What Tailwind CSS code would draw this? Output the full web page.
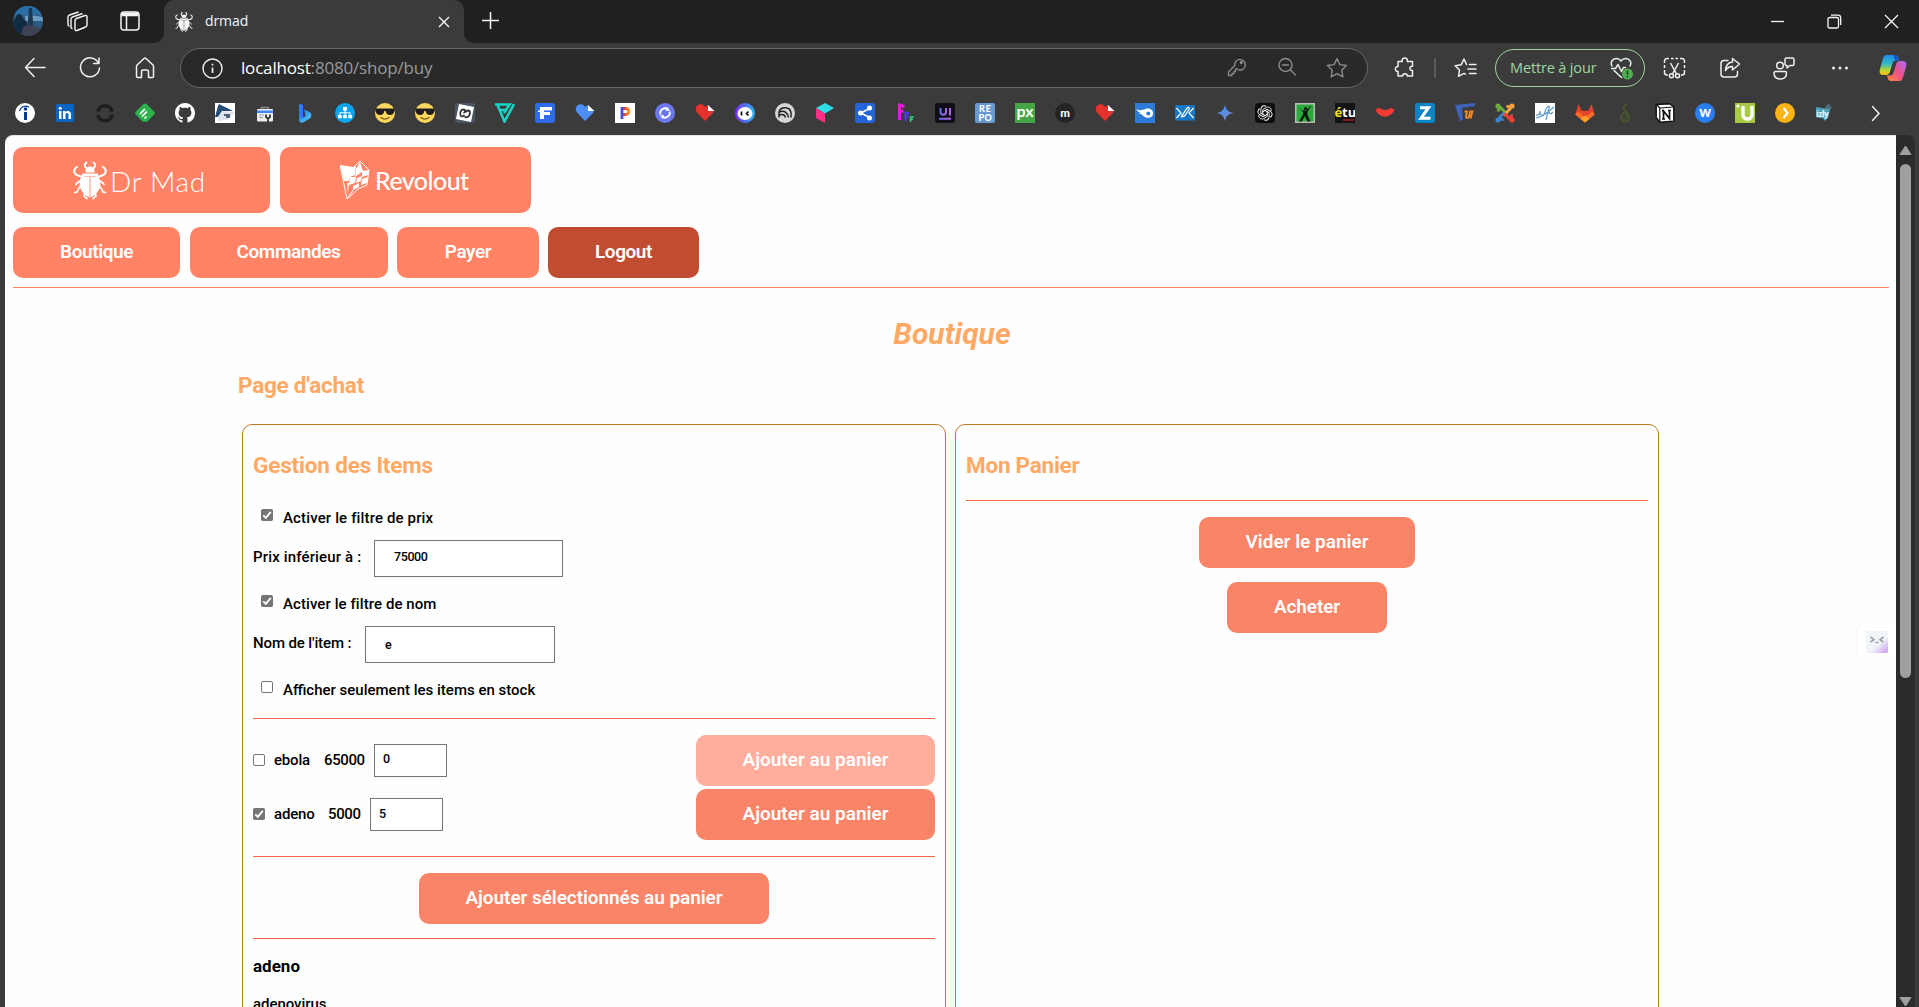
<!DOCTYPE html>
<html lang="fr">
<head>
<meta charset="utf-8">
<title>drmad</title>
<script src="https://cdn.jsdelivr.net/npm/@tailwindcss/browser@4"></script>
</head>
<body class="flex h-[1007px] w-[1919px] flex-col overflow-hidden bg-[#3b3b3b] font-['Roboto',sans-serif] text-black">

<!-- shared symbols -->
<svg class="hidden">
  <symbol id="beetle" viewBox="0 0 34 38">
    <g fill="none" stroke="currentColor" stroke-width="1.700" stroke-linecap="round">
      <path d="M13.500 1C10.500 3 12 6.500 14.500 7.500M20.500 1C23.500 3 22 6.500 19.500 7.500" stroke-width="2"/>
      <path d="M4 5.500C-.5 8 1 13 5 14l6 2M30 5.500c4.500 2.500 3 7.500-1 8.500l-6 2" stroke-width="2"/>
      <path d="M9 19c-3.500.5-5 2-6 4M25 19c3.500.5 5 2 6 4M9 24c-3 1-4 4-5 6.500l-2.500.5M25 24c3 1 4 4 5 6.500l2.500.5M12 31l-1 3.500 3 2.500M22 31l1 3.500-3 2.500"/>
    </g>
    <g fill="currentColor">
      <path d="M12.500 9.500C12.500 6 15 5 17 5s4.500 1 4.500 4.500V11h-9z"/>
      <path d="M9 12h16v3H9z"/>
      <path d="M16.600 15.500v20.500C11 34 6.500 28 6.500 22c0-2.500.7-4.500 2-6.500zM17.400 15.500v20.500C23 34 27.500 28 27.500 22c0-2.500-.7-4.500-2-6.500z"/>
    </g>
  </symbol>
  <symbol id="cool" viewBox="0 0 20 20">
    <circle cx="10" cy="10" r="10" fill="#ffd75e"/>
    <path d="M0.500 5.500H19.500V7.500C19 10.800 17.500 12 15 12s-4-1.500-4.300-4H9.300C9 10.500 7.500 12 5 12S1 10.800.5 7.500z" fill="#1f1f1f"/>
    <path d="M6 14.500c2.500 2 5.500 2 8 0" fill="none" stroke="#7a5a1a" stroke-width="1.200" stroke-linecap="round"/>
  </symbol>
  <symbol id="heartdoc" viewBox="0 0 20 20">
    <path d="M10 18L2 9.500C-1 6 1.500 1 6 1.200 8 1.400 9.500 2.500 10 4L13 2v6h6c-.3 1-1 2-2 3z" fill="currentColor"/>
    <path d="M13 2l6.500 6H13z" fill="#fff"/>
  </symbol>
  <symbol id="check" viewBox="0 0 12 12">
    <rect width="12" height="12" rx="1.800" fill="#757575"/>
    <path d="M2.300 6.300l2.500 2.500 5-6" fill="none" stroke="#fff" stroke-width="1.900"/>
  </symbol>
</svg>

<!-- tab strip -->
<div class="flex h-[43px] shrink-0 bg-[#202020] text-[#f5f5f5]">
  <div class="w-[164px] bg-[#3b3b3b]">
    <div class="flex h-[43px] items-center rounded-br-[10px] bg-[#202020] pl-[13px] pb-px">
      <svg class="size-[30px]" viewBox="0 0 30 30"><defs><clipPath id="av"><circle cx="15" cy="15" r="15"/></clipPath></defs><g clip-path="url(#av)"><path fill="#2d5a82" d="M0 0h30v30H0z"/><path fill="#2a6ea6" d="M0 0h30v9H0z"/><path fill="#6a9cc0" d="M12 10l5-1 13 2v4H12z"/><path fill="#122a42" d="M3 11c1-4 6-4 6 0l4 4 2 7v8H0V16z"/><path fill="#20384d" d="M16 2l3 0 1.500 20h-6z"/><path fill="#3f4252" d="M10 21c5-3 12-2 18 2v7H8z"/></g></svg>
      <svg class="ml-[23px] size-[23px]" viewBox="0 0 23 23" fill="none" stroke="currentColor" stroke-width="1.400" stroke-linejoin="round"><path d="M9 10.500c0-1 .5-1.500 1.500-2L19 5.500c1.300-.4 2 .2 2 1.300V15c0 1-.5 1.600-1.500 2L11 20.500c-1.300.5-2-.2-2-1.300z"/><path d="M6.500 18.500c-1 0-1.500-.5-1.500-1.500V9c0-1 .5-1.500 1.500-2L16.500 3.500M3.500 16C2.500 16 2 15.500 2 14.500V7c0-1 .5-1.500 1.500-2L12.500 2"/></svg>
      <svg class="ml-[31px] size-[20px]" viewBox="0 0 20 20" fill="none" stroke="currentColor" stroke-width="1.500"><rect x="1" y="1" width="18" height="18" rx="3"/><path d="M1.500 4.500h17" /><path d="M2 3h16" stroke-width="3"/><path d="M6.500 5v14"/></svg>
    </div>
  </div>
  <div class="flex w-[300px] items-center rounded-t-[10px] bg-[#3b3b3b] pl-[10px] pr-[13px]">
    <svg class="size-[20px]"><use href="#beetle"/></svg>
    <span class="mb-[2px] ml-[11px] font-['Open_Sans',sans-serif] text-[14px] tracking-[-0.1px]">drmad</span>
    <svg class="ml-auto size-[14px]" viewBox="0 0 14 14" stroke="currentColor" stroke-width="1.400"><path d="M2 2l10 10M12 2L2 12"/></svg>
  </div>
  <div class="flex-1 bg-[#3b3b3b]">
    <div class="flex h-[43px] rounded-bl-[10px] bg-[#202020]">
      <svg class="ml-[17px] mt-[11px] size-[19px]" viewBox="0 0 19 19" stroke="currentColor" stroke-width="1.500"><path d="M9.500 1v17M1 9.500h17"/></svg>
      <div class="ml-auto mt-[14px] flex gap-[42px] pr-[20px]">
        <svg class="size-[15px]" viewBox="0 0 15 15" stroke="currentColor" stroke-width="1.300"><path d="M1 7.500h13"/></svg>
        <svg class="size-[15px]" viewBox="0 0 15 15" fill="none" stroke="currentColor" stroke-width="1.300"><rect x="1" y="3.500" width="10.500" height="10.500" rx="1.500"/><path d="M4 1.200h7c1.800 0 2.700 1 2.700 2.700v7"/></svg>
        <svg class="size-[15px]" viewBox="0 0 15 15" stroke="currentColor" stroke-width="1.300"><path d="M1 1l13 13M14 1L1 14"/></svg>
      </div>
    </div>
  </div>
</div>

<!-- toolbar -->
<div class="flex h-[50px] shrink-0 items-center pl-[7px] text-[#f0f0f0]">
  <div class="flex w-[165px]">
    <div class="flex w-[55px] justify-center"><svg class="size-[24px]" viewBox="0 0 24 24" fill="none" stroke="currentColor" stroke-width="1.500" stroke-linecap="round" stroke-linejoin="round"><path d="M22 11.500H2.500M11 2.500l-8.500 9 8.500 9"/></svg></div>
    <div class="flex w-[55px] justify-center"><svg class="size-[24px]" viewBox="0 0 24 24" fill="none" stroke="currentColor" stroke-width="1.500" stroke-linecap="round" stroke-linejoin="round"><path d="M20.500 7A9.500 9.500 0 1021.500 12M21 2v5.500h-5.500"/></svg></div>
    <div class="flex w-[55px] justify-center"><svg class="size-[24px]" viewBox="0 0 24 24" fill="none" stroke="currentColor" stroke-width="1.500" stroke-linejoin="round"><path d="M3.500 10.500c0-.8.300-1.200.8-1.700L11 2.500c.7-.6 1.300-.6 2 0l6.700 6.300c.5.500.8.900.8 1.700V20.500a1 1 0 01-1 1h-4V15.500a1.500 1.500 0 00-1.500-1.500h-4a1.500 1.500 0 00-1.500 1.500v6h-4a1 1 0 01-1-1z"/></svg></div>
  </div>
  <div class="ml-[8px] flex h-[40px] w-[1188px] items-center rounded-full border border-[#666] bg-[#292929] pl-[21px] pr-[5px]">
    <svg class="size-[21px]" viewBox="0 0 21 21" fill="none" stroke="currentColor" stroke-width="1.400"><circle cx="10.500" cy="10.500" r="9.500"/><path d="M10.500 9.500V15M10.500 5.800v1.800" stroke-width="1.700"/></svg>
    <span class="ml-[18px] flex-1 font-['Open_Sans',sans-serif] text-[17px] tracking-[-0.18px] text-[#999]"><span class="text-white">localhost</span>:8080/shop/buy</span>
    <div class="flex text-[#8c8c8c]">
      <div class="flex w-[50px] justify-center"><svg class="size-[20px]" viewBox="0 0 20 20" fill="none" stroke="currentColor" stroke-width="1.300" stroke-linejoin="round"><path d="M9.200 11.500a5.300 5.300 0 10-1.500-3L1.500 15V18.500H5V16.500h2v-2h1.500v-2z"/><circle cx="14.300" cy="5.500" r="1"/></svg></div>
      <div class="flex w-[50px] justify-center"><svg class="size-[20px]" viewBox="0 0 20 20" fill="none" stroke="currentColor" stroke-width="1.400" stroke-linecap="round"><circle cx="8.500" cy="8" r="6.500"/><path d="M13.300 12.800L18.500 18M5.500 8h6"/></svg></div>
      <div class="flex w-[50px] justify-center"><svg class="size-[22px]" viewBox="0 0 22 22" fill="none" stroke="currentColor" stroke-width="1.400" stroke-linejoin="round"><path d="M11 1.500l2.900 6.100 6.600.9-4.800 4.700 1.200 6.700-5.900-3.200-5.900 3.200 1.200-6.700L1.500 8.500l6.600-.9z"/></svg></div>
    </div>
  </div>
  <div class="ml-[10px] flex w-[54px] justify-center"><svg class="size-[22px]" viewBox="0 0 22 22" fill="none" stroke="currentColor" stroke-width="1.500" stroke-linejoin="round"><path d="M4 4.500h4.200c-.5-2.500 1-3.500 2.600-3.500s3 1 2.500 3.500H18.500v4.700c-3.500-.3-3.500 4.600 0 4.300V19h-5.200c.4-3-5-3-4.800 0H4v-4.500c-3.500.3-3.500-5.300 0-5z"/></svg></div>
  <div class="ml-[2px] h-[20px] w-[2px] bg-[#5c5c5c]"></div>
  <div class="ml-[2px] flex w-[54px] justify-center"><svg class="size-[23px]" viewBox="0 0 23 23" fill="none" stroke="currentColor" stroke-width="1.500" stroke-linejoin="round" stroke-linecap="round"><path d="M12.500 7.500L10 2 7.200 7.800l-6 .9L5.500 13l-1 6.300L10 16.400l1.500.8M15.500 7.500H22M14 12h8M15.500 16.500H22"/></svg></div>
  <div class="ml-[3px] flex h-[38px] w-[150px] shrink-0 items-center justify-between rounded-full border-[1.500px] border-[#9fd89f] pl-[14px] pr-[11px]">
    <span class="whitespace-nowrap font-['Open_Sans',sans-serif] text-[14.500px] tracking-[-0.15px] text-[#9fd89f]">Mettre à jour</span>
    <svg class="size-[23px]" viewBox="0 0 23 23" fill="none" stroke="#e8f5e8" stroke-width="1.500" stroke-linejoin="round" stroke-linecap="round"><path d="M2 9C0 5 2.500 1.500 6.300 1.500c2 0 3.700 1 4.700 2.500 1-1.500 2.700-2.500 4.700-2.500 4 0 6.300 4 4.300 7.500M4 13.500l7.500 7M1.500 11.500H5.500L8 7.500l3.500 7 2-4h2"/><circle cx="17.500" cy="17" r="5.500" fill="#4caf50" stroke="none"/><path d="M17.500 14v3.200M17.500 19.500v.3" stroke="#1c3d1c"/></svg>
  </div>
  <div class="ml-[2px] flex items-center">
    <div class="flex w-[55px] justify-center"><svg class="size-[23px]" viewBox="0 0 23 23" fill="none" stroke="currentColor" stroke-width="1.500"><path d="M1.500 6V4a2.500 2.500 0 012.500-2.500h2M8 1.500h2.500M12.500 1.500H15M17 1.500h2A2.500 2.500 0 0121.500 4v2M1.500 8v3M21.500 8v3M1.500 13v2.500A2.500 2.500 0 004 18h1M21.500 13v2.500A2.500 2.500 0 0119 18h-1M7.500 6l6 11M15.500 6l-6 11"/><circle cx="8.500" cy="18.800" r="2"/><circle cx="14.500" cy="18.800" r="2"/></svg></div>
    <div class="flex w-[55px] justify-center"><svg class="size-[22px]" viewBox="0 0 22 22" fill="none" stroke="currentColor" stroke-width="1.500" stroke-linejoin="round" stroke-linecap="round"><path d="M9 3.500H5A3 3 0 002 6.500V17a3 3 0 003 3h10.500a3 3 0 003-3v-2.500M13.500 1.500L20.500 7l-7 6v-3.500c-3.500 0-5.500 1.500-7 4 .3-5 2.500-8 7-8.500z"/></svg></div>
    <div class="flex w-[55px] justify-center"><svg class="size-[23px]" viewBox="0 0 23 23" fill="none" stroke="currentColor" stroke-width="1.500" stroke-linejoin="round"><circle cx="7" cy="8.500" r="3.300"/><path d="M2.500 14.500h9.500a1.500 1.500 0 011.500 1.500c0 4-2.500 6-6.200 6S1 20 1 16a1.500 1.500 0 011.500-1.500zM13.500 1h6A1.500 1.500 0 0121 2.500V7a1.500 1.500 0 01-1.500 1.500h-2.700L14 11V8.500h-.5A1.500 1.500 0 0112 7V2.500A1.500 1.500 0 0113.500 1z"/></svg></div>
    <div class="flex w-[55px] justify-center"><svg class="size-[18px]" viewBox="0 0 18 18" fill="currentColor"><circle cx="2.500" cy="9" r="1.500"/><circle cx="9" cy="9" r="1.500"/><circle cx="15.500" cy="9" r="1.500"/></svg></div>
    <div class="flex w-[51px] justify-center"><svg class="size-[28px]" viewBox="0 0 28 28"><defs><linearGradient id="ca" x1="0" y1="0" x2="0" y2="1"><stop offset="0" stop-color="#1b8fe8"/><stop offset=".45" stop-color="#35b8c9"/><stop offset=".75" stop-color="#b8d431"/><stop offset="1" stop-color="#ffc21a"/></linearGradient><linearGradient id="cb" x1="1" y1="0" x2="0" y2="1"><stop offset="0" stop-color="#a56bf5"/><stop offset=".5" stop-color="#f04f8c"/><stop offset="1" stop-color="#ff8a3c"/></linearGradient></defs><path d="M8 1h8c2 0 2.800 1.200 3.300 3l.7 2.500h-3c-2 0-3 1-3.600 3L11 17.500c-.8 2.600-2 3.500-4 3.500H4C1 21 0 18.500 1 15L4 4.500C4.700 2 6 1 8 1z" fill="url(#ca)"/><path d="M20 27h-8c-2 0-2.800-1.200-3.300-3L8 21.500h3c2 0 3-1 3.600-3L17 10.500C17.800 8 19 7 21 7h3c3 0 4 2.500 3 6l-3 10.500c-.7 2.500-2 3.500-4 3.500z" fill="url(#cb)"/><path d="M14 1h2c2 0 2.800 1.200 3.300 3l.7 2.500h-4z" fill="#1557c9"/></svg></div>
  </div>
</div>

<!-- bookmarks -->
<div class="flex h-[42px] shrink-0 items-center gap-[20px] overflow-hidden pb-[2px] pl-[15px]">
  <svg class="size-[20px] shrink-0" viewBox="0 0 20 20"><circle cx="10" cy="10" r="10" fill="#fff"/><circle cx="10.500" cy="6" r="1.800" fill="#003a9b"/><path d="M9 9h3v8H9z" fill="#003a9b"/><path d="M4.500 8C6 3.500 10 1.800 14 4" fill="none" stroke="#003a9b" stroke-width="1.200"/></svg>
  <svg class="size-[20px] shrink-0" viewBox="0 0 20 20"><rect x="1" y="1" width="18" height="18" rx="1.500" fill="#0a66c2"/><path d="M4 8h2.500v8H4zM8 8h2.400v1.200c1.300-2.200 5.600-1.700 5.600 1.800v5h-2.500v-4.500c0-2-3-2-3 0V16H8z" fill="#fff"/><circle cx="5.200" cy="5.200" r="1.500" fill="#fff"/></svg>
  <svg class="size-[20px] shrink-0" viewBox="0 0 20 20" fill="none" stroke="#1e1e1e" stroke-width="3.500"><path d="M2.700 8.500a7.500 7.500 0 0114.600 0M2.700 12a7.500 7.500 0 0014.600 0"/></svg>
  <svg class="size-[20px] shrink-0" viewBox="0 0 20 20"><path d="M10 .5c.6 0 1 .2 1.500.6l7.800 7.600c.7.800.7 1.700 0 2.500L13 18c-.5.500-1 .8-1.700.8H8.700c-.7 0-1.200-.3-1.700-.8L.7 11.200c-.7-.8-.7-1.700 0-2.500l7.800-7.600C9 .7 9.400.5 10 .5z" fill="#2bb24c"/><path d="M5 11l5-5M7 13.500l5-5M9.500 15.500l2-2" stroke="#fff" stroke-width="1.700"/></svg>
  <svg class="size-[20px] shrink-0" viewBox="0 0 16 16" fill="#fff"><path d="M8 0C3.580 0 0 3.580 0 8c0 3.540 2.290 6.530 5.470 7.590.4.070.55-.17.550-.38 0-.19-.01-.82-.01-1.490-2.010.370-2.530-.49-2.690-.94-.09-.23-.48-.94-.82-1.130-.28-.15-.68-.52-.01-.53.630-.01 1.080.580 1.230.820.720 1.210 1.870.870 2.330.660.070-.52.280-.87.510-1.070-1.780-.2-3.640-.89-3.640-3.950 0-.87.310-1.590.820-2.150-.08-.2-.36-1.020.080-2.120 0 0 .670-.21 2.200.820.640-.18 1.320-.27 2-.27s1.360.090 2 .270c1.530-1.040 2.200-.82 2.200-.82.440 1.100.160 1.920.080 2.120.510.560.820 1.270.820 2.150 0 3.070-1.870 3.750-3.650 3.950.290.250.540.730.540 1.480 0 1.070-.01 1.930-.01 2.200 0 .210.150.460.550.380A8.010 8.010 0 0016 8c0-4.420-3.580-8-8-8z"/></svg>
  <svg class="size-[20px] shrink-0" viewBox="0 0 20 20"><path fill="#fff" d="M0 0h20v20H0z"/><path d="M4 1l14 7H7l-4 6H0L3 3z" fill="#274c77"/><path d="M3 14l5-6 12 1-8 8-9 1z" fill="#dfe6ee"/><path d="M9 12h6M11 14h4" stroke="#26374d" stroke-width="1.500"/></svg>
  <svg class="size-[20px] shrink-0" viewBox="0 0 20 20"><path d="M6.500 6V4.500h7V6" fill="none" stroke="#8a8a8a" stroke-width="1.500"/><rect x="2" y="6" width="16" height="12.500" rx="1" fill="#eceff1"/><path d="M2 7.500h16V10H2z" fill="#4285f4"/><path d="M4 12h5M4 14.500h4" stroke="#9aa0a6"/><path d="M11 11.500v2.500l2 1.500 2-1.500v-2.500M13 15v4" stroke="#333" stroke-width="1.800" fill="none"/></svg>
  <svg class="size-[20px] shrink-0" viewBox="0 0 20 20"><defs><linearGradient id="bg" x1="0" y1="0" x2="1" y2="1"><stop offset="0" stop-color="#1e78f0"/><stop offset="1" stop-color="#5ad0f8"/></linearGradient></defs><path d="M4 0.500l4 1.500v13l-4 3.500z" fill="#2b7df5"/><path d="M9 6.500l5.500 2.500c2 1 2.500 4 1 6L8 19.500c-2.500 1-4-1-4-3l6.800-3.500z" fill="url(#bg)"/></svg>
  <svg class="size-[20px] shrink-0" viewBox="0 0 20 20"><circle cx="10" cy="10" r="10" fill="#0aa5ee"/><path d="M8 4h4v3.500H8zM3 12h3.700v3.300H3zM8.200 12h3.700v3.300H8.200zM13.300 12H17v3.300h-3.700z" fill="#fff"/><path d="M10 7v5M4.800 12V9.800h10.400V12" fill="none" stroke="#fff"/></svg>
  <svg class="size-[20px] shrink-0"><use href="#cool"/></svg>
  <svg class="size-[20px] shrink-0"><use href="#cool"/></svg>
  <svg class="size-[20px] shrink-0" viewBox="0 0 20 20"><rect width="20" height="20" rx="3" fill="#4b5563"/><path d="M4 1l15 3-3 15L1 16z" fill="#fff"/><path d="M5.500 12.500c-1-3 .5-6 3-6 2 0 2 3 0 3.500M9.500 14c3 1 5.500-1 5.500-4 0-3.500-4-3-4-.5M5.500 12.500c1 1.500 3 1 4-.5" fill="none" stroke="#333" stroke-width="1.800"/></svg>
  <svg class="size-[20px] shrink-0" viewBox="0 0 20 20" fill="none" stroke="#19d3c5" stroke-width="2.600"><path d="M0 1.500h14.500L9 10M2.500 2l7 16.500L19 1M5.500 7H11"/></svg>
  <svg class="size-[20px] shrink-0" viewBox="0 0 20 20"><rect width="20" height="20" rx="3" fill="#2f6bed"/><path d="M5 4h12v3.500H9V9h6v3H9v4H5V9H3V7.500h2z" fill="#fff"/></svg>
  <svg class="size-[20px] shrink-0 text-[#4d8ef7]"><use href="#heartdoc"/></svg>
  <svg class="size-[20px] shrink-0" viewBox="0 0 20 20"><defs><linearGradient id="pg"><stop offset="0" stop-color="#3c4fe0"/><stop offset=".45" stop-color="#e8492e"/><stop offset="1" stop-color="#f59c28"/></linearGradient></defs><path fill="#fff" d="M0 0h20v20H0z"/><path d="M7 16V5.500h3.500c4.500 0 4.500 6 0 6H7" fill="none" stroke="url(#pg)" stroke-width="2.800"/></svg>
  <svg class="size-[20px] shrink-0" viewBox="0 0 20 20"><circle cx="10" cy="10" r="10" fill="#6d78ee"/><path d="M5.500 11.500A4.700 4.700 0 0113 6.500M14.500 8.500a4.700 4.700 0 01-7.500 5" fill="none" stroke="#fff" stroke-width="1.800"/><path d="M12 4l3 3.500-4 .5zM8 16l-3-3.500 4-.5z" fill="#fff"/></svg>
  <svg class="size-[20px] shrink-0 text-[#e5322d]"><use href="#heartdoc"/></svg>
  <svg class="size-[20px] shrink-0" viewBox="0 0 20 20"><defs><linearGradient id="fg"><stop offset="0" stop-color="#7a2cf0"/><stop offset="1" stop-color="#28b6f6"/></linearGradient></defs><circle cx="10" cy="10" r="10" fill="url(#fg)"/><ellipse cx="10" cy="10.500" rx="7.500" ry="6.500" fill="#fff"/><path d="M6.500 8.500v4M13.500 8.500l-2 2 2 2" stroke="#111" stroke-width="1.700" fill="none"/></svg>
  <svg class="size-[20px] shrink-0" viewBox="0 0 20 20"><circle cx="10" cy="10" r="10" fill="#d6d6d6"/><path d="M4 14.500V9.500C5 3 15.500 3 16 10v4.500M4.500 9c5-2 8.500 1 9 5.500M4 12c4-1.500 6 0 6.500 2.500" fill="none" stroke="#222" stroke-width="1.500"/></svg>
  <svg class="size-[20px] shrink-0" viewBox="0 0 20 20"><path d="M1 5l9-5 9 5-9 5.500z" fill="#2fdde4"/><path d="M1 5l9 5.500V20l-9-5z" fill="#ff2e88"/></svg>
  <svg class="size-[20px] shrink-0" viewBox="0 0 20 20"><rect width="20" height="20" rx="3" fill="#2564d8"/><path d="M14.500 5.500L6 10l8.500 4.500" fill="none" stroke="#fff" stroke-width="1.500"/><g fill="#fff"><circle cx="14.500" cy="5" r="2.500"/><circle cx="5.500" cy="10" r="2.500"/><circle cx="14.500" cy="15" r="2.500"/></g></svg>
  <svg class="size-[20px] shrink-0" viewBox="0 0 20 20" fill="none" stroke-width="2"><path d="M4.500 17V2l5 1.500M4.500 8l4 .5" stroke="#d81fe0" stroke-width="3"/><path d="M10.500 18V9.500l4 1M10.500 13l3 .5" stroke="#4a3bf0"/><path d="M15.500 19v-5h3.500M15.500 16.500h2.500" stroke="#2ed38a" stroke-width="1.500"/></svg>
  <svg class="size-[20px] shrink-0" viewBox="0 0 20 20"><defs><linearGradient id="ug" gradientUnits="userSpaceOnUse" x1="4" y1="0" x2="16" y2="0"><stop offset="0" stop-color="#5f6cf5"/><stop offset="1" stop-color="#c062d8"/></linearGradient></defs><rect width="20" height="20" rx="3" fill="#0e0e14"/><path d="M5.500 5v4c0 3.500 5.500 3.500 5.500 0V5M15 5v7.500M4 15.700h12" fill="none" stroke="url(#ug)" stroke-width="2"/></svg>
  <svg class="size-[20px] shrink-0" viewBox="0 0 20 20"><rect width="20" height="20" rx="2" fill="#6899cf"/><text x="10.300" y="9" text-anchor="middle" font-family="Lato" font-weight="900" font-size="9" letter-spacing=".8" fill="#fff">RE</text><text x="10.300" y="17.500" text-anchor="middle" font-family="Lato" font-weight="900" font-size="9" letter-spacing=".4" fill="#fff">PO</text></svg>
  <svg class="size-[20px] shrink-0" viewBox="0 0 20 20"><path fill="#46a549" d="M0 0h20v20H0z"/><text x="10" y="14" text-anchor="middle" font-family="Lato" font-weight="700" font-size="16" fill="#fff">px</text></svg>
  <svg class="size-[20px] shrink-0" viewBox="0 0 20 20"><circle cx="10" cy="10" r="10" fill="#242424"/><text x="10" y="13.500" text-anchor="middle" font-family="Lato" font-weight="900" font-size="11.500" fill="#fff">m</text></svg>
  <svg class="size-[20px] shrink-0 text-[#e5322d]"><use href="#heartdoc"/></svg>
  <svg class="size-[20px] shrink-0" viewBox="0 0 20 20"><path fill="#2d7bd8" d="M0 0h20v20H0z"/><path d="M1.500 6c3 2 6 1 9 0 4-1.500 8 1 7.500 5s-6 5-9 2.500C7 12 7 11 3 10c2 0 2-.5 2-1-2 0-3-1-3.500-3z" fill="#fff"/><circle cx="13.300" cy="10.500" r="2" fill="#2d7bd8"/></svg>
  <svg class="size-[20px] shrink-0" viewBox="0 0 20 20"><rect y="2" width="20" height="15.500" rx="1" fill="#1478c8"/><path d="M1.500 5l4.500 5-4.500 5M18.500 5L14 10l4.500 5M6 14.500L12 5c1.500-1.500 3 0 2 1.500L9.500 13c-1.500 1.500-3.500 0-2-2" fill="none" stroke="#fff" stroke-width="1.200"/></svg>
  <svg class="size-[20px] shrink-0" viewBox="0 0 20 20"><defs><linearGradient id="gg" x1="0" y1="0" x2="1" y2="1"><stop offset="0" stop-color="#3f86e6"/><stop offset=".5" stop-color="#5c8ee0"/><stop offset="1" stop-color="#9b6fb8"/></linearGradient></defs><path d="M10 1.500c.8 5 3.200 7.700 8.500 8.500-5.300.8-7.700 3.500-8.500 8.500C9.200 13.500 6.800 10.800 1.500 10 6.800 9.200 9.200 6.500 10 1.500z" fill="url(#gg)"/></svg>
  <svg class="size-[20px] shrink-0" viewBox="0 0 20 20"><rect width="20" height="20" rx="4" fill="#0c0c0c"/><g fill="none" stroke="#fff" stroke-width=".9"><path id="kn" d="M7.800 12V6.500l3.700-2.100c2.500-1.200 5.200.8 4.700 3.400"/><use href="#kn" transform="rotate(60 10 10)"/><use href="#kn" transform="rotate(120 10 10)"/><use href="#kn" transform="rotate(180 10 10)"/><use href="#kn" transform="rotate(240 10 10)"/><use href="#kn" transform="rotate(300 10 10)"/></g></svg>
  <svg class="size-[20px] shrink-0" viewBox="0 0 20 20"><path fill="#b9bdb9" d="M0 0h20v20H0z"/><path fill="#2aa93c" d="M1.500 1.500h17v17h-17z"/><path d="M3 4l4 3.500h4L16.500 2 12.500 9v3l3 6.500h-3L9.800 13l-3 5.500H4l4-7V9z" fill="#0b160c"/><circle cx="10.500" cy="5.500" r="1.600" fill="#0b160c"/></svg>
  <svg class="size-[20px] shrink-0" viewBox="0 0 20 20"><path fill="#141414" d="M0 0h20v20H0z"/><text x="-.5" y="14" font-family="Open Sans" font-weight="700" font-size="13" fill="#f2e21c">é</text><text x="7" y="14" font-family="Open Sans" font-weight="700" font-size="13" fill="#fff">tu</text><path d="M8 17h11" stroke="#a01c1c" stroke-width="1.500"/></svg>
  <svg class="size-[20px] shrink-0" viewBox="0 0 20 20"><path d="M.5 6.500l4-1.800c3 3 8 3 11 0l4 1.800c-3 9.500-16 9.500-19 0z" fill="#f03a34"/></svg>
  <svg class="size-[20px] shrink-0" viewBox="0 0 20 20"><rect width="20" height="20" rx="3" fill="#0a86c6"/><path d="M5 4.700h8.500L6 15.300h9.500" fill="none" stroke="#fff" stroke-width="3"/></svg>
  <svg class="size-[20px] shrink-0" viewBox="0 0 20 20"><path d="M0 2L20 0v3L7 5l1 12-3 1z" fill="#3f63b8"/><path d="M9.500 8.500h2.500l-1 5c0 2 2 2 3 0l1.200-5h2.300l-2 7" fill="none" stroke="#f08a24" stroke-width="1.900"/></svg>
  <svg class="size-[20px] shrink-0" viewBox="0 0 20 20" fill="none" stroke-width="3" stroke-linejoin="round"><path d="M3.500 8.500V6.500l2-2 7 7" stroke="#6fae3e"/><path d="M11.500 3.500h2l2 2-7 7" stroke="#f9a13a"/><path d="M8.500 16.500h-2l-2-2 5-5" stroke="#3b84c8"/><path d="M16.500 11.500v2l-2 2-5-5" stroke="#ee4035"/><g stroke="none"><circle cx="3" cy="3" r="2.600" fill="#6fae3e"/><circle cx="17" cy="3" r="2.600" fill="#f9a13a"/><circle cx="3" cy="17" r="2.600" fill="#3b84c8"/><circle cx="17" cy="17" r="2.600" fill="#ee4035"/></g></svg>
  <svg class="size-[20px] shrink-0" viewBox="0 0 20 20"><path fill="#fff" d="M0 0h20v20H0z"/><path d="M1 12c3 1 4-2 4-4 0 6 4 5 5 1 1-5 5-8 4-4l-3 12M1 15c7-1 12-6 18-11M14 9c1 3 2 2 4 0" fill="none" stroke="#5f9ccc" stroke-width="1.200"/></svg>
  <svg class="size-[20px] shrink-0" viewBox="0 0 20 20"><path d="M10 19.500L.3 11.500 3.500 1l3.200 6.800h6.600L16.500 1l3.200 10.500z" fill="#e2432a"/><path d="M10 19.500L.3 11.500l2.500-3L10 14l7.200-5.500 2.500 3z" fill="#fc6d26"/><path d="M10 19.500l-4.500-3.700L10 12.500l4.500 3.300z" fill="#fca326"/></svg>
  <svg class="size-[20px] shrink-0" viewBox="0 0 20 20" fill="none" stroke="#4f6628" stroke-width="1.200"><path d="M10.500 1v1.500c-2.500 2-2.500 4 0 5.500 2 1.500 1.500 3 0 3.500M10 9.500c-5 2-5.500 9 0 9s5.500-6 1.500-8M8 16c3 0 4-1.500 4-3.500"/></svg>
  <svg class="size-[20px] shrink-0" viewBox="0 0 20 20"><path d="M1.200 1.500L14.500.7l4.300 3v14.500L5 19.300l-3.800-4.500z" fill="#fff" stroke="#111" stroke-width="1.400"/><path d="M4.800 5l14-1M4.800 5v14M1.500 1.500L4.800 5" stroke="#111" stroke-width="1.200"/><path d="M8.500 16V8l6 7.500V7.500M7 7.800h2.200M13 7.500h3M7 16h3" stroke="#111" stroke-width="1.700" fill="none"/></svg>
  <svg class="size-[20px] shrink-0" viewBox="0 0 20 20"><circle cx="10" cy="10" r="10" fill="#2b7ff5"/><text x="10" y="14" text-anchor="middle" font-family="Lato" font-weight="900" font-size="14.500" fill="#fff">w</text></svg>
  <svg class="size-[20px] shrink-0" viewBox="0 0 20 20"><path fill="#a9cb43" d="M0 0h20v20H0z"/><path d="M8 3v8.500c0 6 9 6 9 0V3" fill="none" stroke="#fff" stroke-width="3.400"/><circle cx="2.800" cy="3" r="1.500" fill="#fff"/></svg>
  <svg class="size-[20px] shrink-0" viewBox="0 0 20 20"><circle cx="10" cy="10" r="10" fill="#fbb316"/><path d="M8.500 5l4 5-4 5" fill="none" stroke="#fff" stroke-width="2.200"/></svg>
  <svg class="size-[20px] shrink-0" viewBox="0 0 20 20"><path d="M10 5l3.500-5L17 5l-3 2z" fill="#4d6c7c"/><path d="M1 4l10 1.500 4 .5-1.500 8-3.500 4-2-2.500-6.500-1z" fill="#4f9fba"/><text x="1" y="13.500" font-family="Roboto" font-weight="900" font-size="9" letter-spacing="-.5" fill="#d8f4fc">izly</text></svg>
  <svg class="ml-[11px] size-[20px] shrink-0" viewBox="0 0 20 20" fill="none" stroke="#eee" stroke-width="1.500" stroke-linecap="round"><path d="M6.500 3.500l6.500 7-6.500 7"/></svg>
</div>

<!-- viewport -->
<div class="relative flex h-[872px] pl-[5px]">
  <main class="w-[1891px] overflow-hidden rounded-tl-[8px] border-t border-[#e6e6e6] bg-[#fefefe]">
    <header class="px-[8px] pt-[11px] text-[19px] font-semibold text-white">
      <div class="flex gap-[10px]">
        <a class="flex h-[66px] w-[257px] items-center rounded-[10px] bg-[#ff8364] pl-[60px] text-white">
          <svg class="h-[39px] w-[34px]"><use href="#beetle"/></svg>
          <span class="ml-[3px] mt-px font-['Lato',sans-serif] text-[28px] font-light tracking-[0.7px]">Dr Mad</span>
        </a>
        <a class="flex h-[66px] w-[251px] items-center rounded-[10px] bg-[#ff8364] pl-[60px] text-white">
          <svg class="h-[38px] w-[30px]" viewBox="0 0 30 38"><path d="M0 4l13 2 3-1-1 9-5 2-1 4H4z" fill="#fff"/><path d="M0 4L7 38l9-13M14 6l6-6 9 9-2 15-9 4L7 38" fill="none" stroke="#fff" stroke-width="1"/><path d="M20 1l3 9-8 6 1-8zM22 10l7-1-1 5-6 2zM10 16l6 0-1 6-6 2zM17 17l5-2-1 5-5 2zM22 18l6-2-1 6-6 2zM13 25l6-3 0 4-6 3zM7 22l2 0-1 10z" fill="#fff"/></svg>
          <span class="ml-[5px] mt-[2px] font-['Lato',sans-serif] text-[25px] font-medium tracking-[-0.55px]">Revolout</span>
        </a>
      </div>
      <nav class="mt-[14px] flex gap-[9px] tracking-[-0.42px]">
        <a class="flex h-[51px] w-[167px] items-center justify-center rounded-[10px] bg-[#ff8364]">Boutique</a>
        <a class="ml-px flex h-[51px] w-[198px] items-center justify-center rounded-[10px] bg-[#ff8364] pr-px">Commandes</a>
        <a class="flex h-[51px] w-[142px] items-center justify-center rounded-[10px] bg-[#ff8364]">Payer</a>
        <a class="flex h-[51px] w-[151px] items-center justify-center rounded-[10px] bg-[#c04d32]">Logout</a>
      </nav>
      <hr class="mt-[9px] w-[1876px] border-0 border-t border-[#ff8364]">
    </header>

    <h1 class="mt-[28px] pl-[3px] text-center text-[30px] font-bold italic leading-[36px] text-[#ffa964]">Boutique</h1>
    <h2 class="ml-[233px] mt-[17px] text-[22.500px] font-bold leading-[32px] tracking-[-0.23px] text-[#ffa964]">Page d'achat</h2>

    <div class="ml-[237px] mt-[23px] flex gap-[9px] text-[15px] font-medium leading-[20px]">
      <section class="h-[640px] w-[704px] rounded-[10px] border border-[#bd7a26] px-[10px]">
        <h3 class="mt-[24px] text-[22.500px] font-bold leading-[32px] tracking-[-0.17px] text-[#ffa964]">Gestion des Items</h3>
        <label class="mt-[27px] flex h-[20px] pl-[8px] tracking-[0.14px]"><svg class="mr-[10px] mt-px size-[12px]"><use href="#check"/></svg>Activer le filtre de prix</label>
        <label class="mt-[12px] flex h-[37px] items-center"><span class="w-[121px] pb-[3px] tracking-[0.15px]">Prix inférieur à :</span><span class="flex h-[37px] w-[189px] items-center border border-[#767676] bg-white pb-[3px] pl-[19px] text-[12.500px] tracking-[-0.4px]">75000</span></label>
        <label class="mt-[17px] flex h-[20px] pl-[8px] tracking-[0.08px]"><svg class="mr-[10px] mt-px size-[12px]"><use href="#check"/></svg>Activer le filtre de nom</label>
        <label class="mt-[12px] flex h-[37px] items-center"><span class="w-[112px] pb-[3px] tracking-[-0.12px]">Nom de l'item :</span><span class="flex h-[37px] w-[190px] items-center border border-[#767676] bg-white pl-[19px] text-[12.500px]">e</span></label>
        <label class="mt-[17px] flex h-[20px] pl-[8px]"><span class="mr-[10px] mt-px size-[12px] rounded-[2px] border border-[#767676] bg-white"></span>Afficher seulement les items en stock</label>
        <hr class="mt-[18px] border-0 border-t border-[#ee6745]">
        <div class="mt-[16px] flex h-[51px] items-center">
          <span class="mb-[2px] size-[12px] rounded-[2px] border border-[#767676] bg-white"></span>
          <span class="ml-[9px] w-[50px] pb-[2px] tracking-[-0.2px]">ebola</span><span class="w-[50px] pb-[2px] tracking-[-0.4px]">65000</span>
          <span class="flex h-[33px] w-[73px] items-center border border-[#767676] bg-white pb-[3px] pl-[8px] text-[12.500px]">0</span>
          <span class="ml-auto flex h-[51px] w-[239px] items-center justify-center rounded-[10px] bg-[#ffad9c] pb-px text-[19px] font-semibold text-white">Ajouter au panier</span>
        </div>
        <div class="mt-[3px] flex h-[51px] items-center">
          <svg class="mb-[2px] size-[12px]"><use href="#check"/></svg>
          <span class="ml-[9px] w-[54px] pb-[2px] tracking-[-0.15px]">adeno</span><span class="w-[42px] pb-[2px] tracking-[-0.4px]">5000</span>
          <span class="flex h-[33px] w-[73px] items-center border border-[#767676] bg-white pb-[2px] pl-[8px] text-[12.500px]">5</span>
          <span class="ml-auto flex h-[51px] w-[239px] items-center justify-center rounded-[10px] bg-[#f98467] pb-px text-[19px] font-semibold text-white">Ajouter au panier</span>
        </div>
        <hr class="mt-[16px] border-0 border-t border-[#ee6745]">
        <div class="mx-auto mt-[16px] flex h-[51px] w-[350px] items-center justify-center rounded-[10px] bg-[#f98467] pb-px text-[19px] font-semibold tracking-[-0.07px] text-white">Ajouter sélectionnés au panier</div>
        <hr class="mt-[14px] border-0 border-t border-[#ee6745]">
        <h4 class="mt-[15px] text-[17px] font-bold leading-[24px]">adeno</h4>
        <p class="mt-[16px] tracking-[-0.05px]">adenovirus</p>
      </section>
      <section class="h-[640px] w-[704px] rounded-[10px] border border-[#bd7a26] px-[10px]">
        <h3 class="mt-[24px] text-[22.500px] font-bold leading-[32px] tracking-[-0.25px] text-[#ffa964]">Mon Panier</h3>
        <hr class="mt-[19px] border-0 border-t border-[#ee6745]">
        <div class="mx-auto mt-[16px] flex h-[51px] w-[216px] items-center justify-center rounded-[10px] bg-[#f98467] pb-px text-[19px] font-semibold text-white">Vider le panier</div>
        <div class="mx-auto mt-[14px] flex h-[51px] w-[160px] items-center justify-center rounded-[10px] bg-[#f98467] pb-px text-[19px] font-semibold tracking-[-0.1px] text-white">Acheter</div>
      </section>
    </div>
  </main>

  <!-- floating assistant -->
  <div class="absolute left-[1858px] top-[488px] flex h-[37px] w-[38px] items-center rounded-l-[8px] bg-white pl-[8px] shadow-[-1px_0_3px_rgba(0,0,0,0.05)]">
    <svg class="size-[22px]" viewBox="0 0 22 22"><defs><linearGradient id="wg" x1=".2" y1=".1" x2="1" y2="1"><stop offset=".5" stop-color="#f1f5f9"/><stop offset="1" stop-color="#c99af0"/></linearGradient></defs><rect width="22" height="22" rx="2" fill="url(#wg)"/><path d="M4.500 6l3.500 2.700-3.500 2.500M17.500 6L14 8.700l3.500 2.500M9.500 11.500h3" fill="none" stroke="#9a9fa5" stroke-width="1.600"/></svg>
  </div>

  <!-- scrollbar -->
  <div class="flex w-[19px] flex-col items-center rounded-tr-[8px] bg-[#2b2b2b]">
    <svg class="mt-[10px] h-[10px] w-[13px]" viewBox="0 0 13 10"><path d="M6.500 1L12 9.500H1z" fill="#9f9f9f" stroke="#9f9f9f" stroke-linejoin="round"/></svg>
    <div class="mt-[9px] h-[514px] w-[11px] rounded-full bg-[#9f9f9f]"></div>
    <svg class="mt-auto h-[10px] w-[13px]" viewBox="0 0 13 10"><path d="M6.500 9L12 .5H1z" fill="#9f9f9f" stroke="#9f9f9f" stroke-linejoin="round"/></svg>
  </div>
</div>
</body>
</html>
